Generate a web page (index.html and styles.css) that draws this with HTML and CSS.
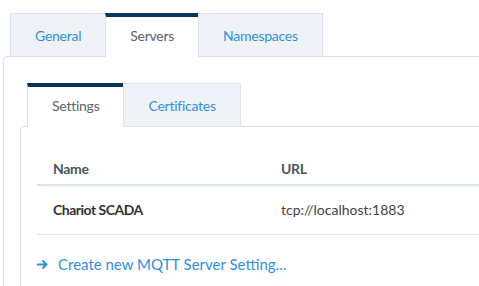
FILE: index.html
```html
<!DOCTYPE html>
<html lang="en">
<head>
    <meta charset="UTF-8">
    <meta name="viewport" content="width=device-width, initial-scale=1.0">
    <title>MQTT Settings</title>
    <link rel="stylesheet" href="styles.css">
</head>
<body>
    <div class="page">
        <!-- top level tabs -->
        <ul class="tabs">
            <li class="tab">General</li>
            <li class="tab active">Servers</li>
            <li class="tab">Namespaces</li>
        </ul>

        <div class="panel">
            <!-- server sub tabs -->
            <ul class="tabs">
                <li class="tab active">Settings</li>
                <li class="tab">Certificates</li>
            </ul>

            <div class="panel inner">
                <table class="servers">
                    <thead>
                        <tr>
                            <th class="col-name">Name</th>
                            <th>URL</th>
                        </tr>
                    </thead>
                    <tbody>
                        <tr>
                            <td class="server-name">Chariot SCADA</td>
                            <td>tcp://localhost:1883</td>
                        </tr>
                    </tbody>
                </table>

                <a class="create-link" href="#">
                    <svg width="11" height="9" viewBox="0 0 11 9">
                        <path d="M0.5 4.5 H9.5 M6 1 L9.5 4.5 L6 8" fill="none" stroke="#2f8fdf" stroke-width="1.8" stroke-linecap="round" stroke-linejoin="round"/>
                    </svg>
                    Create new MQTT Server Setting...
                </a>
            </div>
        </div>
    </div>
</body>
</html>
```

FILE: styles.css
```css
body {
    margin: 0;
    font-family: Lato, "Open Sans", sans-serif;
    background-color: #fff;
    overflow: hidden;
}
.page {
    padding: 13px 0 0 3px;
}
.tabs {
    display: flex;
    list-style: none;
    margin: 0 0 -1px 7px;
    padding: 0;
    position: relative;
    z-index: 1;
}
.tab {
    font-size: 14px;
    letter-spacing: -0.25px;
    line-height: 20px;
    padding: 12px 24px 10px;
    color: #3190df;
    background-color: #eff3f7;
    border: 1px solid #dde3ea;
    margin-right: -1px;
}
.tab.active {
    color: #5a6470;
    background-color: #fff;
    border-top: 4px solid #073656;
    padding-top: 9px;
    border-bottom-color: #fff;
}
.panel {
    width: 700px;
    height: 400px;
    border: 1px solid #dde3ea;
    border-radius: 4px 0 0 0;
    padding: 26px 0 0 16px;
}
.panel.inner {
    width: 600px;
    padding: 20px 0 0 16px;
}
.servers {
    border-collapse: collapse;
    table-layout: fixed;
    width: 560px;
}
th, td {
    text-align: left;
    line-height: 20px;
}
th {
    font-size: 14px;
    letter-spacing: -0.3px;
    padding: 12px 16px 5px;
    color: #4b5562;
    font-weight: bold;
    border-bottom: 2px solid #dde3ea;
}
.col-name {
    width: 196px;
}
td {
    font-size: 14px;
    color: #444;
    padding: 14px 16px;
    border-bottom: 1px solid #dde3ea;
}
.server-name {
    letter-spacing: -0.5px;
    font-weight: bold;
    color: #333;
}
.create-link {
    display: flex;
    align-items: center;
    gap: 10px;
    margin-top: 19px;
    font-size: 15px;
    line-height: 20px;
    color: #2f8fdf;
    text-decoration: none;
}
```
